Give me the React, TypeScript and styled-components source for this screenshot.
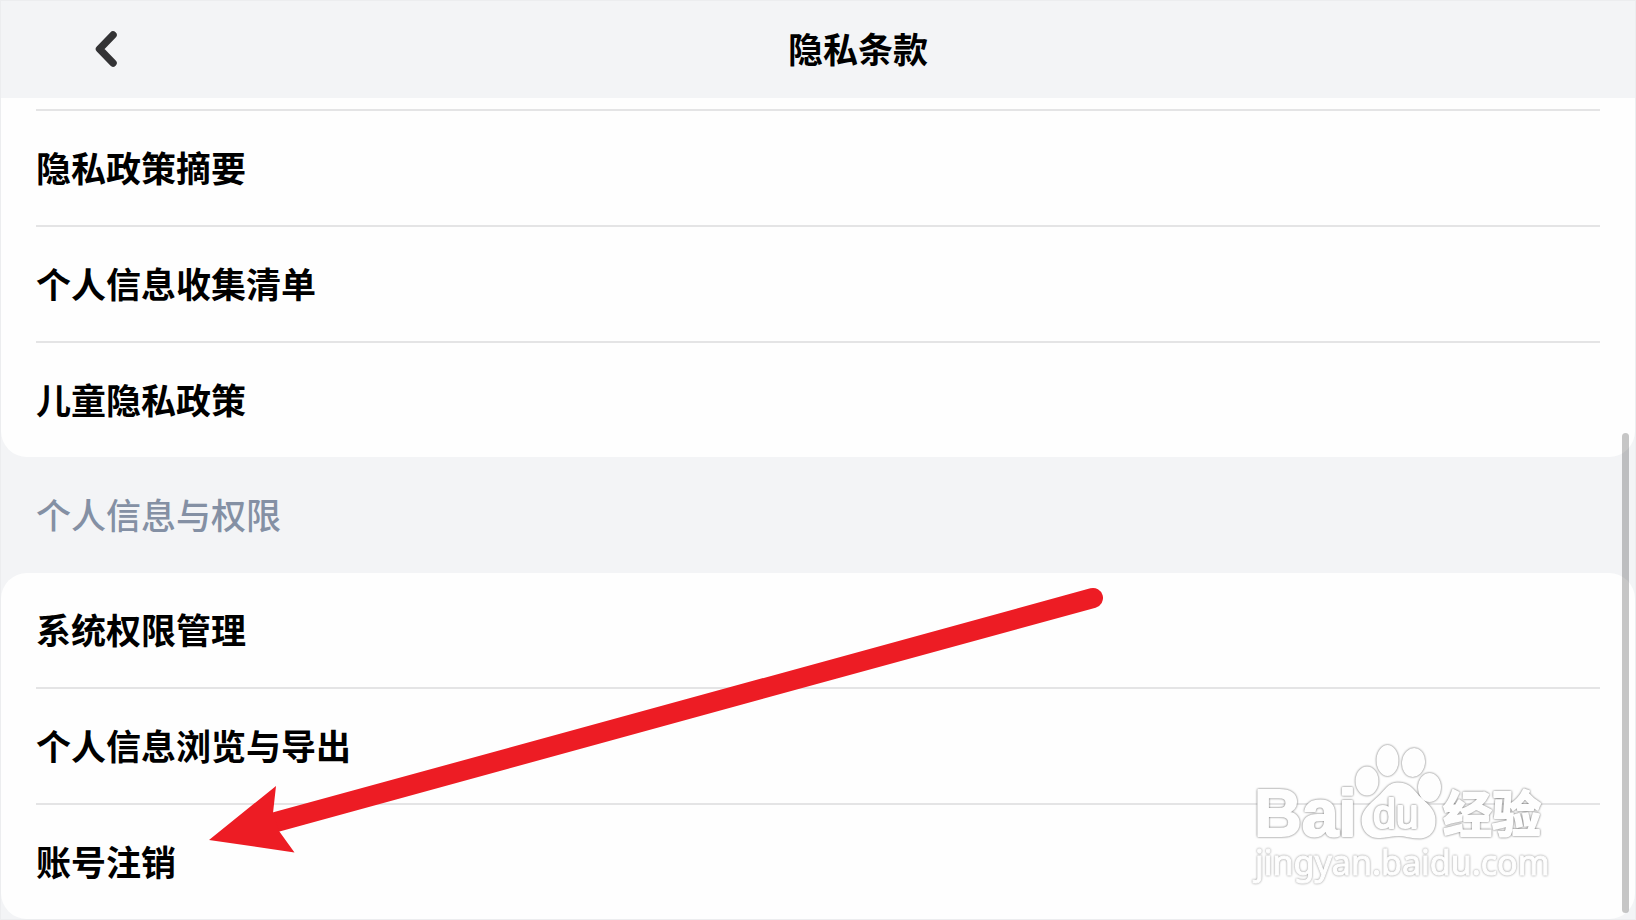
import React from "react";
import styled, { createGlobalStyle } from "styled-components";

const GlobalStyle = createGlobalStyle`
  * { box-sizing: border-box; }
  body {
    margin: 0;
    background: #f3f4f6;
    color: #000;
    font-family: "Noto Sans CJK SC", "Liberation Sans", sans-serif;
  }
  button { font-family: inherit; }
`;

const Page = styled.div`
  position: relative;
  min-height: 100vh;
  border: 1px solid #ecedef;
  background: #f3f4f6;
  overflow: hidden;
`;

const Header = styled.header`
  display: flex;
  align-items: center;
  height: 97px;
  padding: 0 47px 4px 83px;
`;

const BackButton = styled.button`
  display: flex;
  align-items: center;
  justify-content: center;
  width: 44px;
  height: 48px;
  padding: 0;
  border: 0;
  background: none;
  cursor: pointer;
`;

const Title = styled.h1`
  flex: 1;
  margin: 0;
  text-align: center;
  font-size: 35px;
  line-height: 48px;
  font-weight: 700;
`;

const Card = styled.ul<{ $continued?: boolean }>`
  margin: 0;
  padding: ${(p) => (p.$continued ? "11px 35px 0" : "0 35px")};
  list-style: none;
  background: #fefefe;
  border-radius: ${(p) => (p.$continued ? "0 0 26px 26px" : "26px")};
`;

const Row = styled.li<{ $divided: boolean }>`
  border-top: ${(p) => (p.$divided ? "2px solid #e4e4e5" : "0")};
`;

const RowButton = styled.button`
  display: block;
  width: 100%;
  height: 114px;
  padding: 0 0 2px;
  border: 0;
  background: none;
  color: #000;
  text-align: left;
  font-size: 35px;
  line-height: 48px;
  font-weight: 700;
  cursor: pointer;
`;

const SectionTitle = styled.h2`
  margin: 0;
  padding: 33px 35px 35px;
  color: #8490a4;
  font-size: 35px;
  line-height: 48px;
  font-weight: 500;
`;

const ScrollThumb = styled.div`
  position: absolute;
  top: 432px;
  right: 6px;
  bottom: 6px;
  width: 7px;
  border-radius: 4px;
  background: rgba(0, 0, 0, 0.22);
`;

const Arrow = styled.svg`
  position: absolute;
  top: 579px;
  left: 199px;
  pointer-events: none;
`;

const Watermark = styled.svg`
  position: absolute;
  top: 729px;
  right: 69px;
  pointer-events: none;
  fill: #fefefe;
  stroke: #fefefe;
  stroke-width: 2px;
  stroke-linejoin: round;
`;

const Embossed = styled.g`
  filter: drop-shadow(0 0 1px #666);
`;

const EmbossedLight = styled.g`
  stroke-width: 1px;
  filter: drop-shadow(0 0 1px #929292);
`;

const policies = ["隐私政策摘要", "个人信息收集清单", "儿童隐私政策"];
const permissions = ["系统权限管理", "个人信息浏览与导出", "账号注销"];

export default function App() {
  return (
    <>
      <GlobalStyle />
      <Page>
        <Header>
          <BackButton aria-label="返回">
            <svg width="24" height="40" viewBox="0 0 24 40" fill="none">
              <path d="M19 7L5.500 21l13.500 14" stroke="#333335" strokeWidth="7.500" strokeLinecap="round" strokeLinejoin="round" />
            </svg>
          </BackButton>
          <Title>隐私条款</Title>
        </Header>
        <main>
          <Card $continued>
            {policies.map((label) => (
              <Row key={label} $divided>
                <RowButton>{label}</RowButton>
              </Row>
            ))}
          </Card>
          <SectionTitle>个人信息与权限</SectionTitle>
          <Card>
            {permissions.map((label, i) => (
              <Row key={label} $divided={i > 0}>
                <RowButton>{label}</RowButton>
              </Row>
            ))}
          </Card>
        </main>
        <Watermark width="330" height="170" viewBox="0 0 330 170">
          <Embossed>
            <ellipse cx="131" cy="51" rx="10.500" ry="13.500" />
            <ellipse cx="151.500" cy="30.500" rx="10" ry="14.500" />
            <ellipse cx="177.500" cy="32.500" rx="10.500" ry="13.500" transform="rotate(8 177.500 32.500)" />
            <ellipse cx="193.500" cy="57.500" rx="10.500" ry="13.500" />
            <path d="M161 53.500C153 54 150 60 145 65C137 73 126 80 126.500 91C127 101 134 108 144 107C152 106.500 156 105 163 105C170 105 176 108 185 107.500C194 106.500 199 100 198.500 89C198 79 189 73 182 66C176 59 172 53 161 53.500Z" />
          </Embossed>
          <Embossed>
            <text x="18" y="106" fontFamily="Liberation Sans, sans-serif" fontWeight="700" fontSize="66">Bai</text>
            <text x="207" y="102" fontFamily="Noto Sans CJK SC, sans-serif" fontWeight="700" fontSize="49">经验</text>
          </Embossed>
          <Embossed>
            <text x="137" y="98" fontFamily="Liberation Sans, sans-serif" fontSize="41">du</text>
          </Embossed>
          <EmbossedLight>
            <text x="19" y="145" fontFamily="Noto Sans, sans-serif" fontSize="34">jingyan.baidu.com</text>
          </EmbossedLight>
        </Watermark>
        <Arrow width="910" height="290" viewBox="200 580 910 290">
          <path d="M276 822L1093 598" stroke="#ed1c24" strokeWidth="20" strokeLinecap="round" />
          <path d="M209 840L276 786L273 813L279 831L294.500 852.500Z" fill="#ed1c24" />
        </Arrow>
        <ScrollThumb />
      </Page>
    </>
  );
}
